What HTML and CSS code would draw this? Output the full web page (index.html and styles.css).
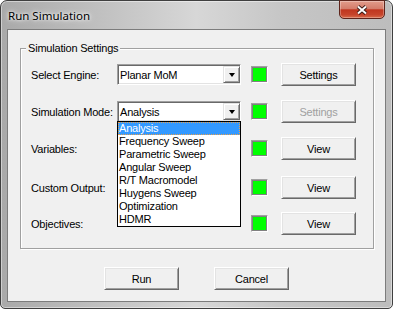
FILE: index.html
```html
<!DOCTYPE html>
<html lang="en">
<head>
  <meta charset="UTF-8" />
  <title>Run Simulation</title>
  <link rel="stylesheet" href="styles.css">
</head>
<body>
  <div class="window">
    <div class="titlebar">
      <span class="title">Run Simulation</span>
      <button class="close" type="button">
        <svg width="12" height="10" viewBox="0 0 12 10">
          <path d="M2 1.5 L10 8.5 M10 1.5 L2 8.5" stroke="#3b1c16" stroke-width="3.8" />
          <path d="M2 1.5 L10 8.5 M10 1.5 L2 8.5" stroke="#fff" stroke-width="1.9" />
        </svg>
      </button>
    </div>

    <div class="client">
      <div class="group">
        <span class="group-title">Simulation Settings</span>

        <div class="row">
          <span class="label">Select Engine:</span>
          <div class="combo">
            <span class="combo-text">Planar MoM</span>
            <span class="combo-btn"><i class="arrow"></i></span>
          </div>
          <span class="led"></span>
          <button class="btn row-btn" type="button">Settings</button>
        </div>

        <div class="row">
          <span class="label">Simulation Mode:</span>
          <div class="combo">
            <span class="combo-text">Analysis</span>
            <span class="combo-btn"><i class="arrow"></i></span>
            <ul class="dropdown">
              <li class="selected">Analysis</li>
              <li>Frequency Sweep</li>
              <li>Parametric Sweep</li>
              <li>Angular Sweep</li>
              <li>R/T Macromodel</li>
              <li>Huygens Sweep</li>
              <li>Optimization</li>
              <li>HDMR</li>
            </ul>
          </div>
          <span class="led"></span>
          <button class="btn row-btn" type="button" disabled>Settings</button>
        </div>

        <div class="row">
          <span class="label">Variables:</span>
          <span class="led"></span>
          <button class="btn row-btn" type="button">View</button>
        </div>

        <div class="row row-wide">
          <span class="label">Custom Output:</span>
          <span class="led"></span>
          <button class="btn row-btn" type="button">View</button>
        </div>

        <div class="row row-tight">
          <span class="label">Objectives:</span>
          <span class="led"></span>
          <button class="btn row-btn" type="button">View</button>
        </div>
      </div>

      <div class="actions">
        <button class="btn" type="button">Run</button>
        <button class="btn" type="button">Cancel</button>
      </div>
    </div>
  </div>
</body>
</html>
```

FILE: styles.css
```css
body {
  margin: 0;
  background: #fff;
  font-family: "Liberation Sans", Arial, sans-serif;
  font-size: 11px;
  letter-spacing: -0.2px;
  color: #000;
}

/* window frame */
.window {
  width: 393px;
  height: 309px;
  box-sizing: border-box;
  border: 1px solid #3f3f3f;
  border-radius: 7px 7px 5px 5px;
  padding: 0 6px 6px;
  display: flex;
  flex-direction: column;
  background: linear-gradient(to right, #a9a9a9 0%, #c0c0c0 25%, #d7d7d7 50%, #c6c6c6 72%, #bdbdbd 100%);
  box-shadow: inset 0 0 0 1px rgba(255, 255, 255, 0.45);
}
.titlebar {
  height: 28px;
  display: flex;
  justify-content: space-between;
  align-items: flex-start;
}
.title {
  font-family: "Noto Sans", "Liberation Sans", sans-serif;
  font-size: 11.5px;
  letter-spacing: 0;
  line-height: 29px;
  padding-left: 1px;
  text-shadow: 0 0 6px #fff, 0 0 3px #fff;
}
.close {
  width: 46px;
  height: 19px;
  margin: -1px 1px 0 0;
  padding: 0;
  border: 1px solid #5e241b;
  border-radius: 0 0 5px 5px;
  display: flex;
  align-items: center;
  justify-content: center;
  background: linear-gradient(#e29c8b 0%, #d47d6b 45%, #c0361f 52%, #c6442b 80%, #d86a48 100%);
  box-shadow: inset 0 0 0 1px rgba(255, 255, 255, 0.3);
}

.client {
  flex: 1;
  border: 1px solid #7c7c7c;
  background: #f0f0f0;
  display: flex;
  flex-direction: column;
}

/* group box */
.group {
  position: relative;
  margin: 18px 11px 0 12px;
  padding: 14px 16px 13px 10px;
  border: 1px solid #a0a0a0;
  box-shadow: inset 1px 1px 0 #fff, 1px 1px 0 #fff;
}
.group-title {
  position: absolute;
  top: -7px;
  left: 5px;
  padding: 0 2px;
  line-height: 13px;
  background: #f0f0f0;
}

.row {
  display: grid;
  grid-template-columns: 76px 124px 17px 78px;
  column-gap: 10px;
  height: 23px;
  align-items: center;
}
.row + .row {
  margin-top: 14px;
}
.row.row-wide {
  margin-top: 16px;
}
.row.row-tight {
  margin-top: 13px;
}
.label {
  grid-column: 1;
  white-space: nowrap;
}
.led {
  grid-column: 3;
  width: 17px;
  height: 17px;
  box-sizing: border-box;
  background: #00ff00;
  border: 1px solid;
  border-color: #a0a0a0 #fff #fff #a0a0a0;
  box-shadow: inset 0 0 0 1px #808080;
}
.row-btn {
  grid-column: 4;
  justify-self: end;
}

/* combo box */
.combo {
  grid-column: 2;
  position: relative;
  height: 21px;
  box-sizing: border-box;
  padding: 1px 0 1px 1px;
  display: flex;
  align-items: center;
  background: #fff;
  border: 1px solid;
  border-color: #a0a0a0 #fff #fff #a0a0a0;
  box-shadow: inset 1px 1px 0 #696969, inset -1px -1px 0 #e3e3e3;
}
.combo-text {
  flex: 1;
  padding-left: 1px;
}
.combo-btn {
  width: 17px;
  height: 17px;
  box-sizing: border-box;
  display: flex;
  align-items: center;
  justify-content: center;
  background: #f0f0f0;
  border: 1px solid;
  border-color: #e3e3e3 #696969 #696969 #e3e3e3;
  box-shadow: inset 1px 1px 0 #fff, inset -1px -1px 0 #a0a0a0;
}
.arrow {
  width: 0;
  height: 0;
  border-left: 3px solid transparent;
  border-right: 3px solid transparent;
  border-top: 4px solid #000;
  margin-top: 1px;
}

.dropdown {
  position: absolute;
  top: 100%;
  left: -1px;
  width: 124px;
  box-sizing: border-box;
  margin: 0;
  padding: 0;
  list-style: none;
  background: #fff;
  border: 1px solid #000;
  z-index: 2;
}
.dropdown li {
  line-height: 13px;
  padding-left: 1px;
  white-space: nowrap;
}
.dropdown li.selected {
  background: #3399ff;
  color: #fff;
  outline: 1px dotted #e9a04a;
  outline-offset: -1px;
}

/* buttons */
.btn {
  width: 75px;
  height: 23px;
  padding: 0;
  font-family: "Liberation Sans", Arial, sans-serif;
  font-size: 11px;
  letter-spacing: -0.2px;
  color: #000;
  background: #f0f0f0;
  border: 1px solid;
  border-color: #fff #696969 #696969 #fff;
  box-shadow: inset 1px 1px 0 #e3e3e3, inset -1px -1px 0 #a0a0a0;
}
.btn:disabled {
  color: #a0a0a0;
}

.actions {
  display: flex;
  justify-content: center;
  gap: 35px;
  margin-top: 18px;
}
```
